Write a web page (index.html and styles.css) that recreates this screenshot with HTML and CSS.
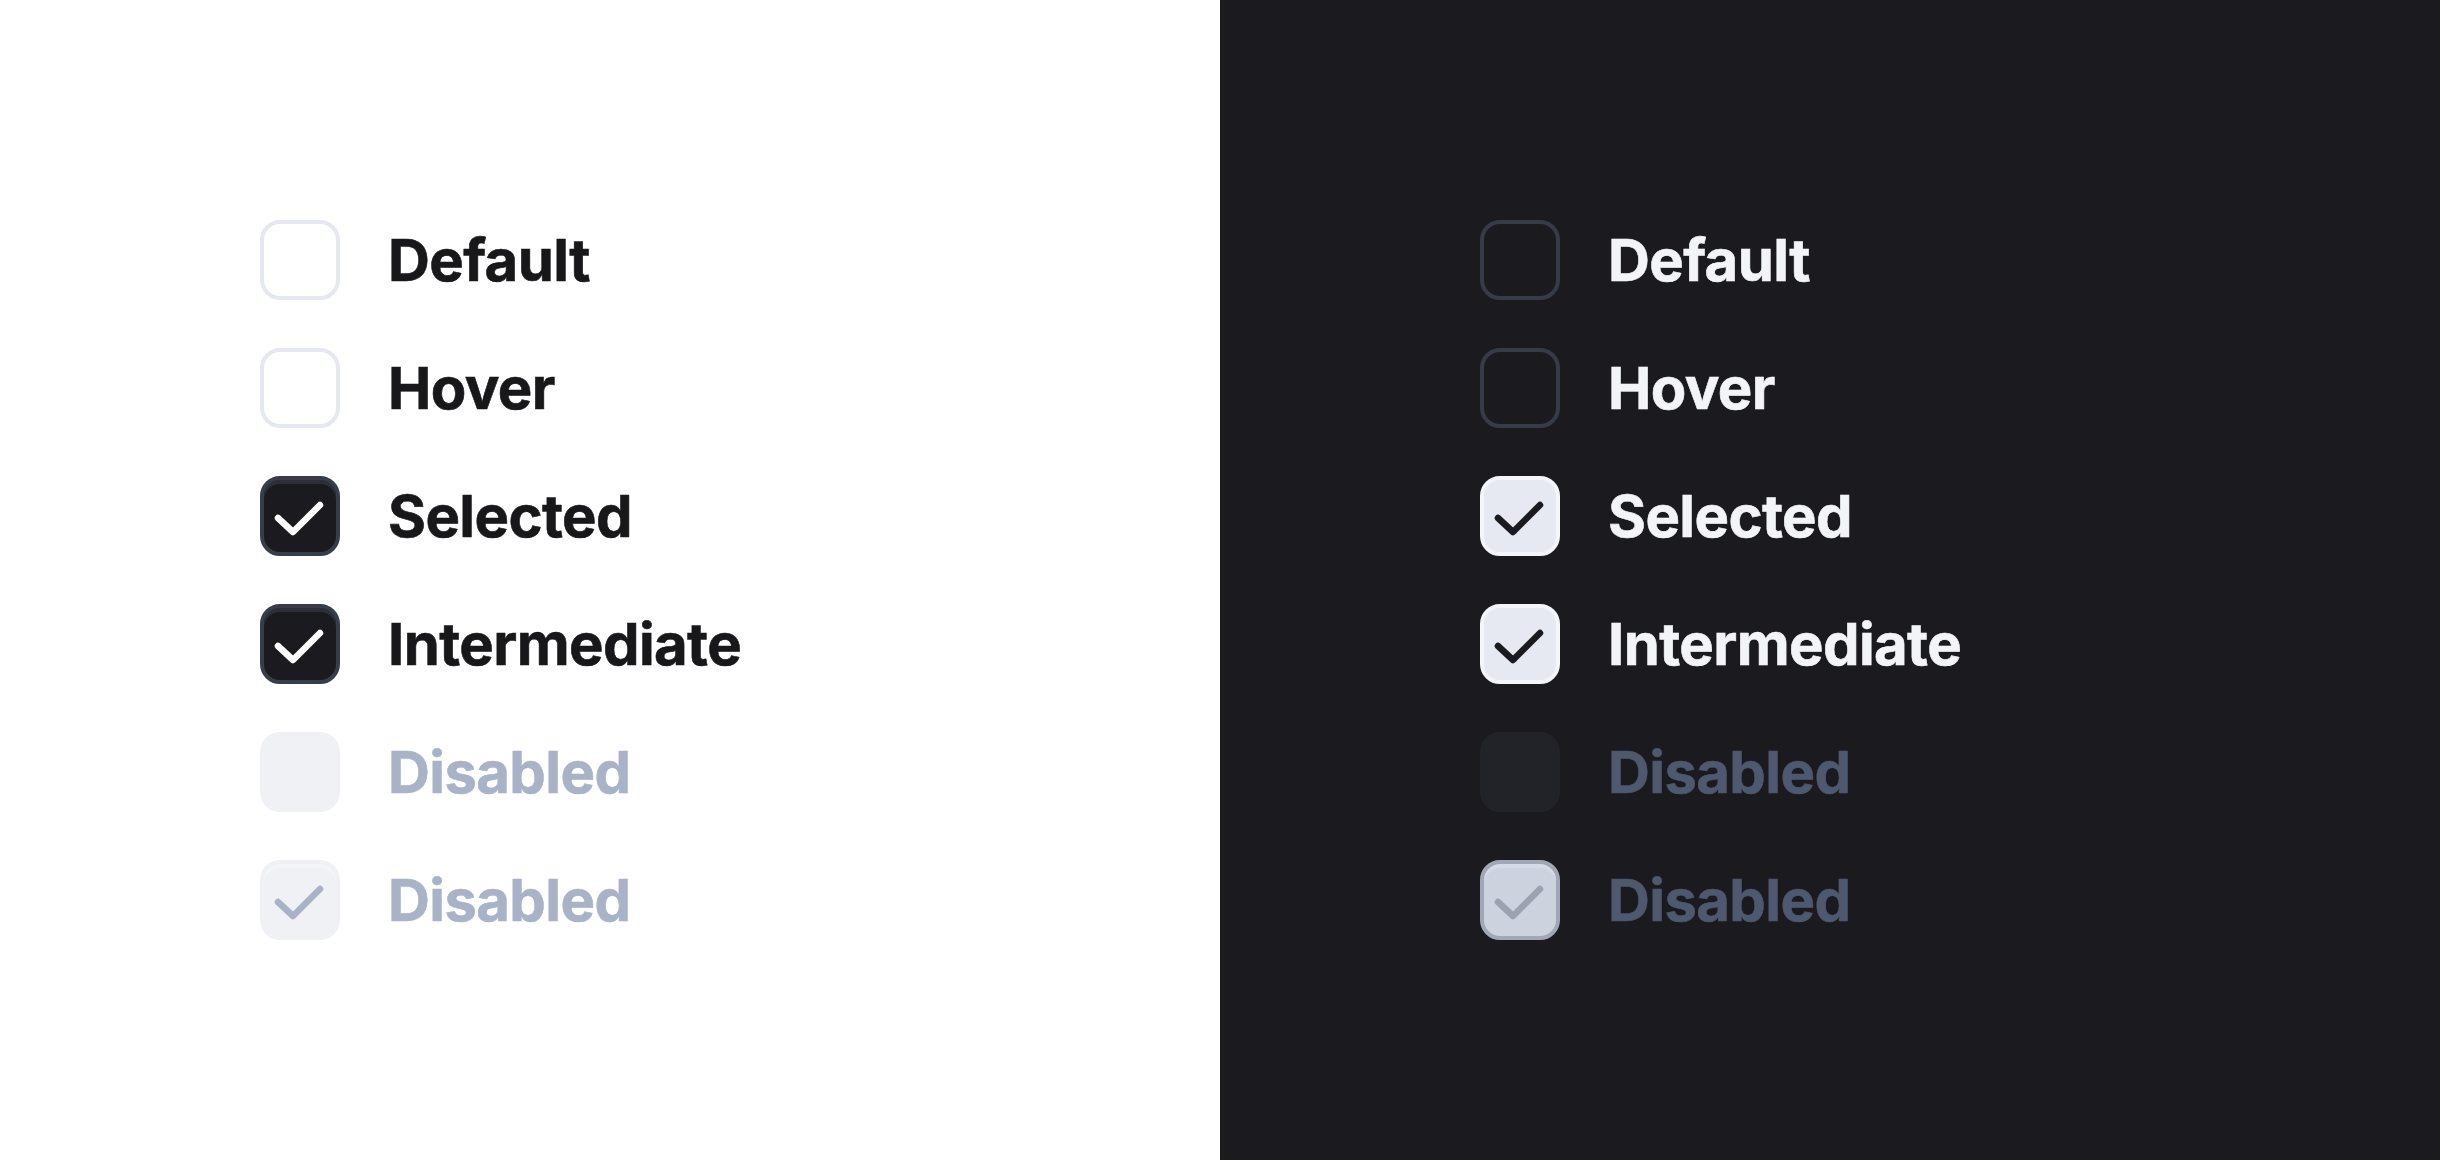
FILE: index.html
```html
<!DOCTYPE html>
<html lang="en">
<head>
    <meta charset="UTF-8">
    <title>Checkbox States</title>
    <link rel="stylesheet" href="styles.css">
</head>
<body>
    <div class="page">
        <section class="panel light">
            <div class="row">
                <span class="box"></span>
                <span class="label">Default</span>
            </div>
            <div class="row">
                <span class="box"></span>
                <span class="label">Hover</span>
            </div>
            <div class="row">
                <span class="box checked">
                    <svg viewBox="0 0 80 80"><path d="M18 42 L33 56 L60 29"/></svg>
                </span>
                <span class="label">Selected</span>
            </div>
            <div class="row">
                <span class="box checked">
                    <svg viewBox="0 0 80 80"><path d="M18 42 L33 56 L60 29"/></svg>
                </span>
                <span class="label">Intermediate</span>
            </div>
            <div class="row disabled">
                <span class="box"></span>
                <span class="label">Disabled</span>
            </div>
            <div class="row disabled">
                <span class="box checked">
                    <svg viewBox="0 0 80 80"><path d="M18 42 L33 56 L60 29"/></svg>
                </span>
                <span class="label">Disabled</span>
            </div>
        </section>
        <section class="panel dark">
            <div class="row">
                <span class="box"></span>
                <span class="label">Default</span>
            </div>
            <div class="row">
                <span class="box"></span>
                <span class="label">Hover</span>
            </div>
            <div class="row">
                <span class="box checked">
                    <svg viewBox="0 0 80 80"><path d="M18 42 L33 56 L60 29"/></svg>
                </span>
                <span class="label">Selected</span>
            </div>
            <div class="row">
                <span class="box checked">
                    <svg viewBox="0 0 80 80"><path d="M18 42 L33 56 L60 29"/></svg>
                </span>
                <span class="label">Intermediate</span>
            </div>
            <div class="row disabled">
                <span class="box"></span>
                <span class="label">Disabled</span>
            </div>
            <div class="row disabled">
                <span class="box checked">
                    <svg viewBox="0 0 80 80"><path d="M18 42 L33 56 L60 29"/></svg>
                </span>
                <span class="label">Disabled</span>
            </div>
        </section>
    </div>
</body>
</html>
```

FILE: styles.css
```css
body {
    margin: 0;
    font-family: Inter, 'Noto Sans', sans-serif;
}
.page {
    display: grid;
    grid-template-columns: 1220px 1220px;
    height: 1160px;
}
.panel {
    display: flex;
    flex-direction: column;
    gap: 48px;
    padding: 220px 0 0 260px;
}
.row {
    display: flex;
    align-items: center;
    gap: 48px;
    height: 80px;
}
.box {
    box-sizing: border-box;
    width: 80px;
    height: 80px;
    border-radius: 20px;
    border: 4px solid transparent;
    display: flex;
    align-items: center;
    justify-content: center;
}
.box svg {
    width: 80px;
    height: 80px;
    flex: none;
    fill: none;
    stroke-width: 6.5;
    stroke-linecap: round;
    stroke-linejoin: round;
}
.label {
    font-size: 58px;
    font-weight: 700;
    letter-spacing: -0.6px;
    -webkit-text-stroke: 0.6px currentColor;
}

/* light */
.light {
    background: #ffffff;
}
.light .label {
    color: #18181b;
}
.light .box {
    border-color: #e6e8f0;
}
.light .box.checked {
    background: #1b1b1f;
    border-color: #383d4a;
    box-shadow: inset 0 4px 0 #2c2f38;
}
.light .box.checked svg {
    stroke: #ffffff;
}
.light .disabled .label {
    color: #a9b3c8;
}
.light .disabled .box {
    background: #f0f1f5;
    border-color: #f0f1f5;
    box-shadow: none;
}
.light .disabled .box.checked {
    box-shadow: inset 0 4px 0 #f4f5f8;
}
.light .disabled .box svg {
    stroke: #a9b3c8;
}

/* dark */
.dark {
    background: #1b1a1f;
}
.dark .label {
    color: #f3f4f7;
}
.dark .box {
    border-color: #363b47;
}
.dark .box.checked {
    background: #e6e9f1;
    border-color: #f4f5f8;
}
.dark .box.checked svg {
    stroke: #1b1a1f;
}
.dark .disabled .label {
    color: #4e586e;
}
.dark .disabled .box {
    background: #212328;
    border-color: #212328;
}
.dark .disabled .box.checked {
    background: #ccd3df;
    border-color: #a0a8b6;
    box-shadow: inset 0 4px 0 #d6dce6;
}
.dark .disabled .box svg {
    stroke: #9ba3b1;
}
```
